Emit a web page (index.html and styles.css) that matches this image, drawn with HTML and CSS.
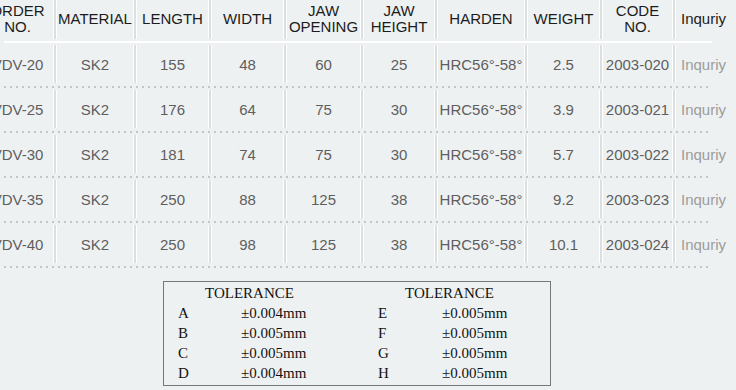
FILE: index.html
```html
<!DOCTYPE html>
<html>
<head>
<meta charset="utf-8">
<link rel="stylesheet" href="styles.css">
</head>
<body>
<div class="specs">
  <div class="row head">
    <div class="c">ORDER<br>NO.</div>
    <div class="c">MATERIAL</div>
    <div class="c">LENGTH</div>
    <div class="c">WIDTH</div>
    <div class="c">JAW<br>OPENING</div>
    <div class="c">JAW<br>HEIGHT</div>
    <div class="c">HARDEN</div>
    <div class="c">WEIGHT</div>
    <div class="c">CODE<br>NO.</div>
    <div class="c inq">Inquriy</div>
  </div>
  <div class="row d">
    <div class="c">VDV-20</div><div class="c">SK2</div><div class="c">155</div><div class="c">48</div><div class="c">60</div><div class="c">25</div><div class="c">HRC56°-58°</div><div class="c">2.5</div><div class="c">2003-020</div><div class="c inq">Inquriy</div>
  </div>
  <div class="row d">
    <div class="c">VDV-25</div><div class="c">SK2</div><div class="c">176</div><div class="c">64</div><div class="c">75</div><div class="c">30</div><div class="c">HRC56°-58°</div><div class="c">3.9</div><div class="c">2003-021</div><div class="c inq">Inquriy</div>
  </div>
  <div class="row d">
    <div class="c">VDV-30</div><div class="c">SK2</div><div class="c">181</div><div class="c">74</div><div class="c">75</div><div class="c">30</div><div class="c">HRC56°-58°</div><div class="c">5.7</div><div class="c">2003-022</div><div class="c inq">Inquriy</div>
  </div>
  <div class="row d">
    <div class="c">VDV-35</div><div class="c">SK2</div><div class="c">250</div><div class="c">88</div><div class="c">125</div><div class="c">38</div><div class="c">HRC56°-58°</div><div class="c">9.2</div><div class="c">2003-023</div><div class="c inq">Inquriy</div>
  </div>
  <div class="row d">
    <div class="c">VDV-40</div><div class="c">SK2</div><div class="c">250</div><div class="c">98</div><div class="c">125</div><div class="c">38</div><div class="c">HRC56°-58°</div><div class="c">10.1</div><div class="c">2003-024</div><div class="c inq">Inquriy</div>
  </div>
</div>
<div class="tol">
  <div class="h">TOLERANCE</div><div class="h">TOLERANCE</div>
  <div>A</div><div>±0.004mm</div><div>E</div><div>±0.005mm</div>
  <div>B</div><div>±0.005mm</div><div>F</div><div>±0.005mm</div>
  <div>C</div><div>±0.005mm</div><div>G</div><div>±0.005mm</div>
  <div>D</div><div>±0.004mm</div><div>H</div><div>±0.005mm</div>
</div>
</body>
</html>
```
FILE: styles.css
```css
html, body {
  margin: 0;
  background: #eef1f2;
  overflow: hidden;
}
.specs {
  width: 731px;
  margin-left: -19px;
  font-family: "Liberation Sans", Arial, sans-serif;
  font-size: 15px;
}
.row {
  display: grid;
  grid-template-columns: 73px 80px 75px 75px 77px 74px 90px 75px 73px 39px;
  padding-bottom: 2px;
}
.c {
  display: flex;
  align-items: center;
  justify-content: center;
  text-align: center;
  white-space: nowrap;
  box-sizing: border-box;
}
.c + .c {
  border-left: 2px solid #dcdfe0;
  box-shadow: -1px 0 0 #fff, inset 1px 0 0 #fff;
}
.c.inq {
  justify-content: flex-start;
  padding-left: 6px;
}
.head {
  color: #1c1c1c;
  line-height: 16px;
  background: linear-gradient(#fff, #fff) right bottom / calc(100% - 23px) 2px no-repeat;
}
.head .c {
  height: 39px;
  margin-bottom: 2px;
  padding-bottom: 2px;
}
.d {
  color: #5e5e5e;
  background: repeating-linear-gradient(90deg, #c2c6c8 0 2px, transparent 2px 6px) right bottom / calc(100% - 23px) 2px no-repeat;
}
.d .c {
  height: 38px;
  margin: 2px 0 3px;
}
.d .c.inq {
  color: #9c9c9c;
}
.tol {
  margin: 13px 0 0 163px;
  width: 372px;
  border: 1px solid #777;
  padding: 1px 0 2px 14px;
  display: grid;
  grid-template-columns: 63px 137px 64px 1fr;
  font-family: "Liberation Serif", "Times New Roman", serif;
  font-size: 15px;
  line-height: 20px;
  color: #111;
}
.tol .h {
  grid-column: span 2;
  padding-left: 27px;
}
```
